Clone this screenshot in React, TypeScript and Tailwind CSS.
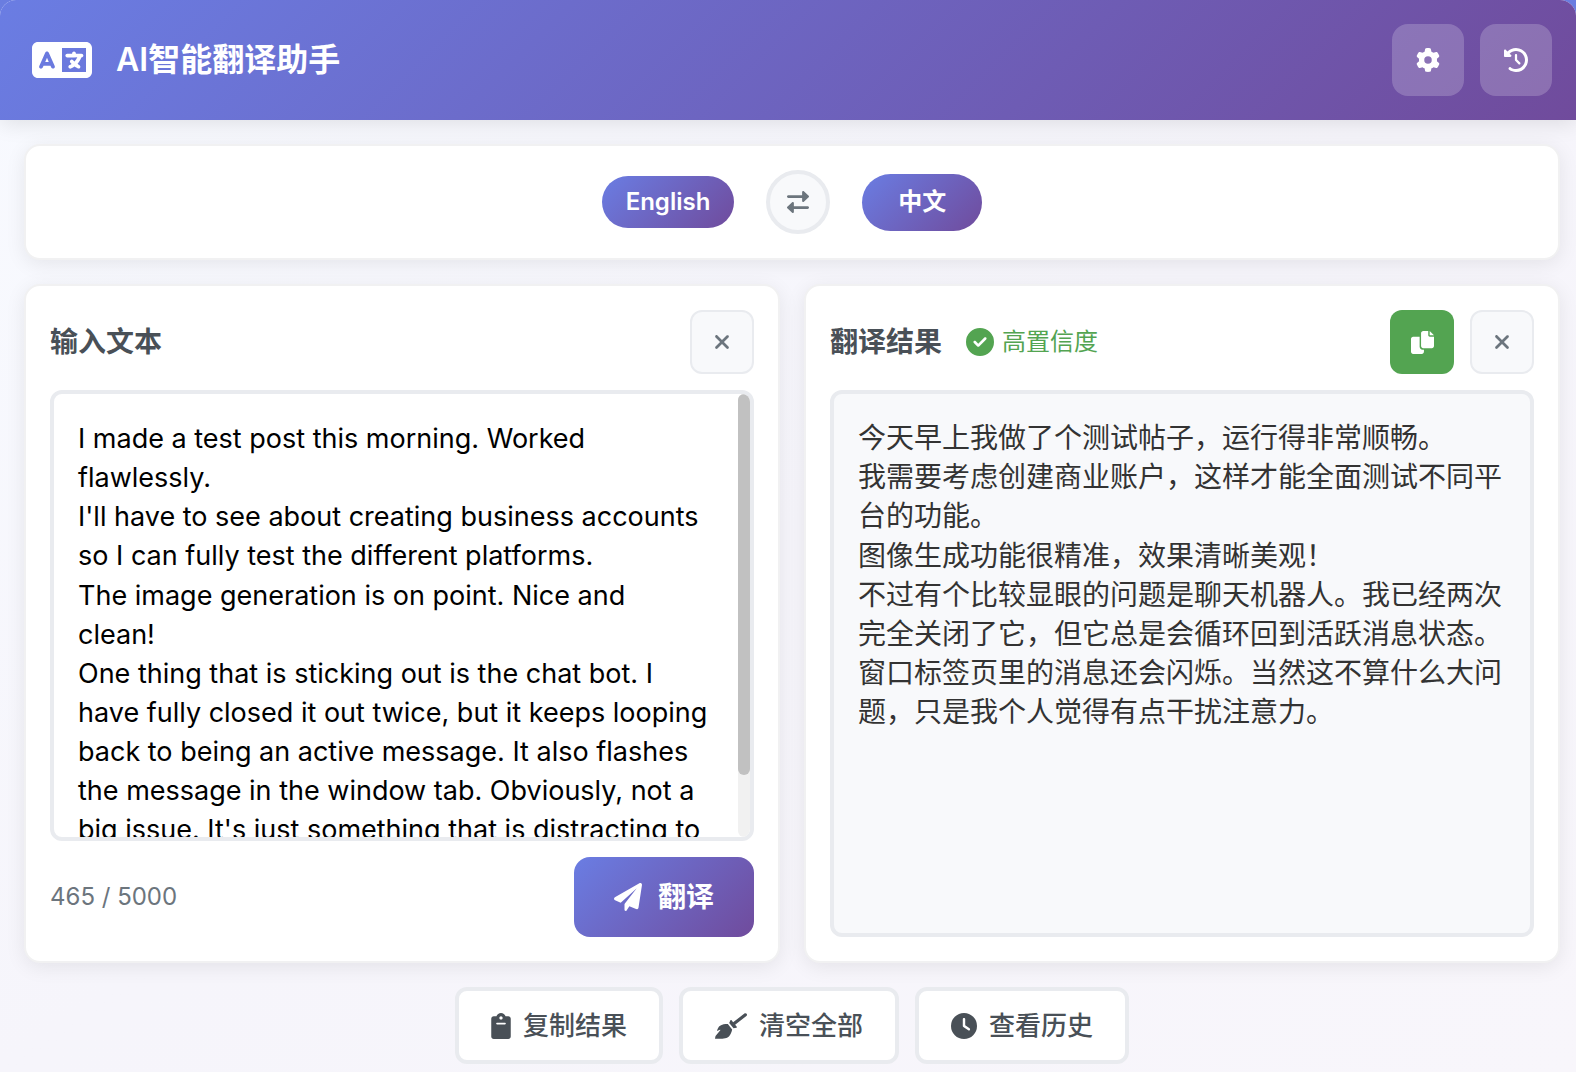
import { useState } from "react";
import type { ReactNode } from "react";
import { FaCircleCheck, FaClock, FaGear, FaLanguage } from "react-icons/fa6";

const SOURCE_TEXT = [
  "I made a test post this morning. Worked flawlessly.",
  "I'll have to see about creating business accounts so I can fully test the different platforms.",
  "The image generation is on point. Nice and",
  "clean!",
  "One thing that is sticking out is the chat bot. I have fully closed it out twice, but it keeps looping back to being an active message. It also flashes the message in the window tab. Obviously, not a big issue. It's just something that is distracting to me personally, of course.",
].join("\n");

const RESULT_LINES = [
  "今天早上我做了个测试帖子，运行得非常顺畅。",
  "我需要考虑创建商业账户，这样才能全面测试不同平台的功能。",
  "图像生成功能很精准，效果清晰美观！",
  "不过有个比较显眼的问题是聊天机器人。我已经两次完全关闭了它，但它总是会循环回到活跃消息状态。窗口标签页里的消息还会闪烁。当然这不算什么大问题，只是我个人觉得有点干扰注意力。",
];

const ICONS = {
  copy: {
    width: 512,
    d: "M384 96L384 0h-112c-26.51 0-48 21.49-48 48v288c0 26.51 21.49 48 48 48H464c26.51 0 48-21.49 48-48V128h-95.1C398.4 128 384 113.6 384 96zM416 0v96h96L416 0zM192 352V128h-144c-26.51 0-48 21.49-48 48v288c0 26.51 21.49 48 48 48h192c26.51 0 48-21.49 48-48L288 416h-32C220.7 416 192 387.3 192 352z",
  },
  swap: {
    width: 512,
    d: "M32 160h319.9l.0791 72c0 9.547 5.652 18.19 14.41 22c8.754 3.812 18.95 2.077 25.93-4.406l112-104c10.24-9.5 10.24-25.69 0-35.19l-112-104c-6.992-6.484-17.18-8.217-25.93-4.408c-8.758 3.816-14.41 12.46-14.41 22L351.9 96H32C14.31 96 0 110.3 0 127.1S14.31 160 32 160zM480 352H160.1L160 279.1c0-9.547-5.652-18.19-14.41-22C136.9 254.2 126.7 255.9 119.7 262.4l-112 104c-10.24 9.5-10.24 25.69 0 35.19l112 104c6.992 6.484 17.18 8.219 25.93 4.406C154.4 506.2 160 497.5 160 488L160.1 416H480c17.69 0 32-14.31 32-32S497.7 352 480 352z",
  },
  close: {
    width: 320,
    d: "M310.6 361.4c12.5 12.5 12.5 32.75 0 45.25C304.4 412.9 296.2 416 288 416s-16.38-3.125-22.62-9.375L160 301.3L54.63 406.6C48.38 412.9 40.19 416 32 416S15.63 412.9 9.375 406.6c-12.5-12.5-12.5-32.75 0-45.25l105.4-105.4L9.375 150.6c-12.5-12.5-12.5-32.75 0-45.25s32.75-12.5 45.25 0L160 210.8l105.4-105.4c12.5-12.5 32.75-12.5 45.25 0s12.5 32.75 0 45.25l-105.4 105.4L310.6 361.4z",
  },
  send: {
    width: 512,
    d: "M511.6 36.86l-64 415.1c-1.5 9.734-7.375 18.22-15.97 23.05c-4.844 2.719-10.27 4.097-15.68 4.097c-4.188 0-8.319-.8154-12.29-2.472l-122.6-51.1l-50.86 76.29C226.3 508.5 219.8 512 212.8 512C201.3 512 192 502.7 192 491.2v-96.18c0-7.115 2.372-14.03 6.742-19.64L416 96l-293.7 264.3L19.69 317.5C8.438 312.8 .8125 302.2 .0625 289.1s5.469-23.72 16.06-29.77l448-255.1c10.69-6.109 23.88-5.547 34 1.406S513.5 24.72 511.6 36.86z",
  },
  broom: {
    width: 640,
    d: "M93.13 257.7C71.25 275.1 53 313.5 38.63 355.1L99 333.1c5.75-2.125 10.62 4.749 6.625 9.499L11 454.7C3.75 486.1 0 510.2 0 510.2s206.6 13.62 266.6-34.12c60-47.87 76.63-150.1 76.63-150.1L256.5 216.7C256.5 216.7 153.1 209.1 93.13 257.7zM633.2 12.34c-10.84-13.91-30.91-16.45-44.91-5.624l-225.7 175.6l-34.99-44.06C322.5 131.9 312.5 133.1 309 140.5L283.8 194.1l86.75 109.2l58.75-12.5c8-1.625 11.38-11.12 6.375-17.5l-33.19-41.79l225.2-175.2C641.6 46.38 644.1 26.27 633.2 12.34z",
  },
  clipboard: {
    width: 384,
    d: "M336 64h-53.88C268.9 26.8 233.7 0 192 0S115.1 26.8 101.9 64H48C21.5 64 0 85.48 0 112v352C0 490.5 21.5 512 48 512h288c26.5 0 48-21.48 48-48v-352C384 85.48 362.5 64 336 64zM192 64c17.67 0 32 14.33 32 32s-14.33 32-32 32S160 113.7 160 96S174.3 64 192 64zM272 224h-160C103.2 224 96 216.8 96 208C96 199.2 103.2 192 112 192h160C280.8 192 288 199.2 288 208S280.8 224 272 224z",
  },
  history: {
    width: 512,
    d: "M256 0C397.4 0 512 114.6 512 256C512 397.4 397.4 512 256 512C201.7 512 151.2 495 109.7 466.1C95.2 455.1 91.64 436 101.8 421.5C111.9 407 131.8 403.5 146.3 413.6C177.4 435.3 215.2 448 256 448C362 448 448 362 448 256C448 149.1 362 64 256 64C202.1 64 155 85.46 120.2 120.2L151 151C166.1 166.1 155.4 192 134.1 192H24C10.75 192 0 181.3 0 168V57.94C0 36.56 25.85 25.85 40.97 40.97L74.98 74.98C121.3 28.69 185.3 0 255.1 0L256 0zM256 128C269.3 128 280 138.7 280 152V246.1L344.1 311C354.3 320.4 354.3 335.6 344.1 344.1C335.6 354.3 320.4 354.3 311 344.1L239 272.1C234.5 268.5 232 262.4 232 256V152C232 138.7 242.7 128 256 128V128z",
  },
};

function Icon({ name, className }: { name: keyof typeof ICONS; className: string }) {
  const icon = ICONS[name];
  return (
    <svg
      viewBox={`0 0 ${icon.width} 512`}
      fill="currentColor"
      className={`shrink-0 ${className}`}
      aria-hidden="true"
    >
      <path d={icon.d} />
    </svg>
  );
}

function HeaderButton({ label, children }: { label: string; children: ReactNode }) {
  return (
    <button
      type="button"
      aria-label={label}
      className="flex size-18 items-center justify-center rounded-2xl bg-white/20 text-2xl text-white"
    >
      {children}
    </button>
  );
}

function ClearButton({ label, onClick }: { label: string; onClick?: () => void }) {
  return (
    <button
      type="button"
      aria-label={label}
      onClick={onClick}
      className="flex size-16 items-center justify-center rounded-xl border-2 border-[#e9ebef] bg-[#f8f9fb] text-[#6c757d]"
    >
      <Icon name="close" className="h-[22px] w-[14px]" />
    </button>
  );
}

function Panel({ children }: { children: ReactNode }) {
  return (
    <section className="flex min-h-0 min-w-0 flex-col gap-4 rounded-2xl border-2 border-[#f1f1f2] bg-white p-6 shadow-[0_4px_20px_rgba(0,0,0,0.08)]">
      {children}
    </section>
  );
}

function ActionButton({ icon, children }: { icon: ReactNode; children: ReactNode }) {
  return (
    <button
      type="button"
      className="flex h-[77px] items-center gap-3 rounded-xl border-4 border-[#e9ebef] bg-white px-8 text-[26px] font-medium text-[#495057]"
    >
      {icon}
      {children}
    </button>
  );
}

export default function App() {
  const [text, setText] = useState(SOURCE_TEXT);

  return (
    <div className="bg-[#6a7de0] font-['Inter','Noto_Sans_CJK_SC',sans-serif]">
      <div className="flex h-screen min-h-[900px] flex-col overflow-hidden rounded-t-2xl bg-linear-to-br from-[#f8faff] via-[#f6f5fb] to-[#f8f6fb]">
        <header className="flex shrink-0 items-center justify-between bg-[linear-gradient(135deg,#6a7de3_0%,#704b9c_100%)] py-6 pr-6 pl-8 text-white shadow-[0_4px_20px_rgba(0,0,0,0.1)]">
          <div className="flex items-center gap-6">
            <FaLanguage className="h-12 w-[60px]" />
            <h1 className="text-[32px] font-semibold">AI智能翻译助手</h1>
          </div>
          <div className="flex gap-4">
            <HeaderButton label="设置">
              <FaGear />
            </HeaderButton>
            <HeaderButton label="历史记录">
              <Icon name="history" className="size-6" />
            </HeaderButton>
          </div>
        </header>

        <main className="flex min-h-0 flex-1 flex-col gap-6 pt-6 pr-4 pb-2 pl-6">
          <div className="flex items-center justify-center gap-8 rounded-2xl border-2 border-[#f1f1f2] bg-white p-6 shadow-[0_4px_20px_rgba(0,0,0,0.08)]">
            <button
              type="button"
              className="flex h-[52px] min-w-[120px] items-center justify-center rounded-full bg-[linear-gradient(135deg,#6a7de3_0%,#704b9c_100%)] px-6 text-2xl font-semibold text-white"
            >
              English
            </button>
            <button
              type="button"
              aria-label="交换语言"
              className="flex size-16 items-center justify-center rounded-full border-4 border-[#e9ebef] bg-[#f8f9fb] text-[#6c757d]"
            >
              <Icon name="swap" className="size-[22px]" />
            </button>
            <button
              type="button"
              className="flex h-[57px] min-w-[120px] items-center justify-center rounded-full bg-[linear-gradient(135deg,#6a7de3_0%,#704b9c_100%)] px-6 text-2xl font-semibold text-white"
            >
              中文
            </button>
          </div>

          <div className="grid min-h-0 flex-1 grid-cols-2 gap-6">
            <Panel>
              <div className="flex items-center justify-between">
                <label htmlFor="source" className="text-[28px] font-semibold text-[#495057]">
                  输入文本
                </label>
                <ClearButton label="清空输入" onClick={() => setText("")} />
              </div>
              <div className="flex min-h-0 flex-1 overflow-hidden rounded-xl border-4 border-[#e9ebef] bg-white">
                <textarea
                  id="source"
                  value={text}
                  onChange={(event) => setText(event.target.value)}
                  className="min-w-0 flex-1 resize-none px-6 py-[25px] text-[27px] leading-[1.45] text-black outline-none [scrollbar-width:none]"
                />
                <div className="w-3 rounded-full bg-[#f1f1f1]" aria-hidden="true">
                  <div className="h-[86%] rounded-full bg-[#c1c1c1]" />
                </div>
              </div>
              <div className="flex items-center justify-between">
                <span className="text-2xl text-[#6c757d]">465 / 5000</span>
                <button
                  type="button"
                  className="flex h-20 items-center gap-4 rounded-2xl bg-[linear-gradient(135deg,#6a7de3_0%,#704b9c_100%)] px-10 text-[28px] font-semibold text-white"
                >
                  <Icon name="send" className="size-7" />
                  翻译
                </button>
              </div>
            </Panel>

            <Panel>
              <div className="flex items-center justify-between">
                <div className="flex items-center gap-6">
                  <h2 className="text-[28px] font-semibold text-[#495057]">翻译结果</h2>
                  <span className="flex items-center gap-2 text-2xl text-[#53a451]">
                    <FaCircleCheck className="text-[28px]" />
                    高置信度
                  </span>
                </div>
                <div className="flex gap-4">
                  <button
                    type="button"
                    aria-label="复制"
                    className="flex size-16 items-center justify-center rounded-xl bg-[#53a451] text-white"
                  >
                    <Icon name="copy" className="size-[23px]" />
                  </button>
                  <ClearButton label="清空结果" />
                </div>
              </div>
              <div className="min-h-0 flex-1 overflow-hidden rounded-xl border-4 border-[#e9ebef] bg-[#f8f9fb] px-6 py-[25px] text-[28px] leading-[1.4] text-[#333333]">
                {RESULT_LINES.map((line) => (
                  <p key={line}>{line}</p>
                ))}
              </div>
            </Panel>
          </div>

          <div className="flex justify-center gap-4">
            <ActionButton icon={<Icon name="clipboard" className="h-[26px] w-5" />}>复制结果</ActionButton>
            <ActionButton icon={<Icon name="broom" className="h-[26px] w-8" />}>清空全部</ActionButton>
            <ActionButton icon={<FaClock />}>查看历史</ActionButton>
          </div>
        </main>
      </div>
    </div>
  );
}
